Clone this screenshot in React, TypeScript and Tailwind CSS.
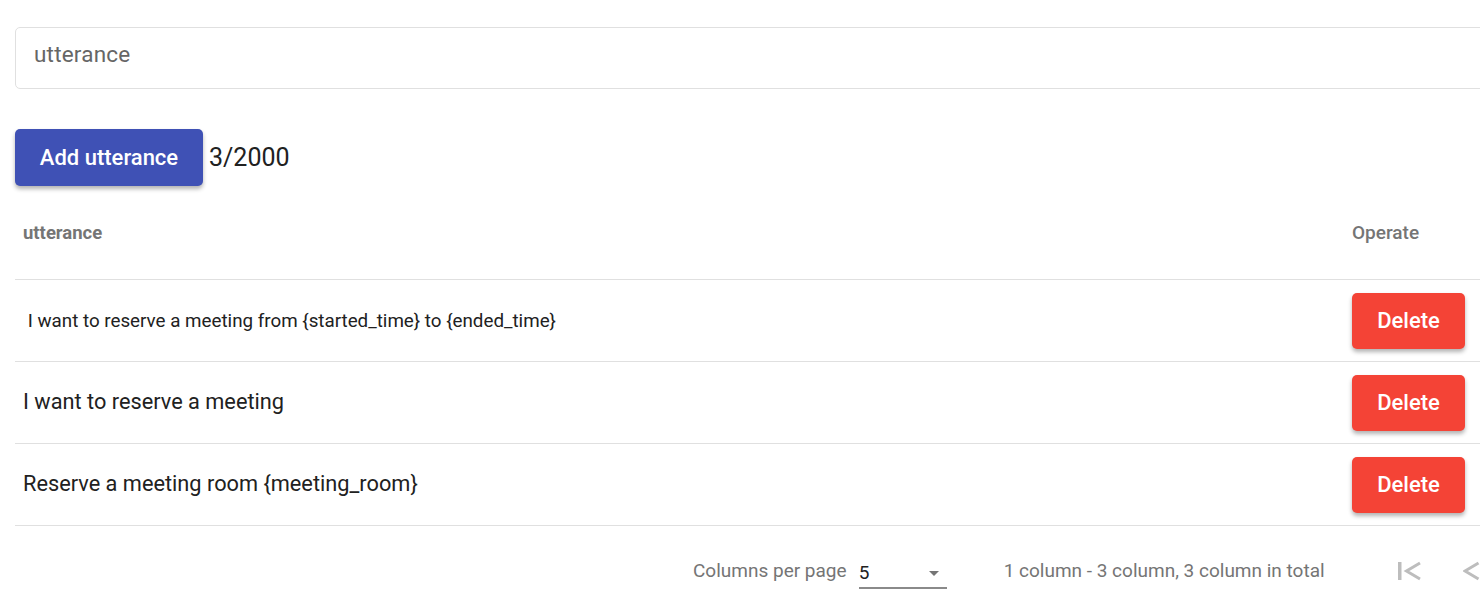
const rows = [
  { text: " I want to reserve a meeting from {started_time} to {ended_time}", small: true },
  { text: "I want to reserve a meeting", small: false },
  { text: "Reserve a meeting room {meeting_room}", small: false },
]

function FirstPageIcon() {
  return (
    <svg width="24" height="20" viewBox="0 0 24 20" fill="none">
      <rect x="0" y="1" width="3.5" height="18" fill="#bdbdbd" />
      <polyline points="22,2 8.5,10 22,18" stroke="#bdbdbd" strokeWidth="3" />
    </svg>
  )
}

function PrevPageIcon() {
  return (
    <svg width="17" height="20" viewBox="0 0 17 20" fill="none">
      <polyline points="15.5,2 2,10 15.5,18" stroke="#bdbdbd" strokeWidth="3" />
    </svg>
  )
}

export default function App() {
  return (
    <div className="w-[1480px] h-[608px] overflow-hidden bg-white font-['Roboto',sans-serif] text-[#212121]">
      <div className="w-[1500px] pl-[15px] pt-[27px]">
        {/* 输入框 */}
        <div className="h-[62px] border border-[#e0e0e0] rounded-[5px] flex items-center pl-[18px] pb-[7px]">
          <span className="text-[22.5px] text-[#666] tracking-[0.2px]">utterance</span>
        </div>

        <div className="mt-[40px] flex items-center">
          <button className="h-[57px] w-[188px] rounded-[5px] bg-[#3f51b5] text-white text-[22px] font-medium shadow-[0_3px_4px_rgba(0,0,0,0.3)]">
            Add utterance
          </button>
          <span className="ml-[6px] text-[25px] text-[#212121]">3/2000</span>
        </div>

        {/* 表格 */}
        <div className="mt-[7px]">
          <div className="h-[87px] flex items-center border-b border-[#e0e0e0] pb-[5px]">
            <div className="flex-1 pl-[8px] text-[18.5px] font-bold text-[#757575]">utterance</div>
            <div className="w-[148px] text-[19px] font-medium text-[#757575]">Operate</div>
          </div>
          {rows.map((r, i) => (
            <div key={i} className="h-[82px] flex items-center border-b border-[#e0e0e0]">
              <div
                className={
                  r.small
                    ? "flex-1 pl-[8px] pt-[2px] text-[18.8px] whitespace-pre"
                    : "flex-1 pl-[8px] text-[21.75px] whitespace-pre"
                }
              >
                {r.text}
              </div>
              <div className="w-[148px]">
                <button className="h-[56px] w-[113px] rounded-[5px] bg-[#f44336] text-white text-[22px] font-medium shadow-[0_3px_4px_rgba(0,0,0,0.3)]">
                  Delete
                </button>
              </div>
            </div>
          ))}
        </div>

        {/* 分页 */}
        <div className="h-[90px] flex items-center pl-[678px] text-[19px] text-[#757575]">
          <span>Columns per page</span>
          <div className="ml-[12px] w-[88px] h-[36px] border-b-2 border-[#8a8a8a] flex items-center justify-between pt-[6px]">
            <span className="text-[19px] text-[#212121]">5</span>
            <svg width="24" height="24" viewBox="0 0 24 24" fill="#757575" className="mr-[1px]">
              <path d="M7 10l5 5 5-5z" />
            </svg>
          </div>
          <span className="ml-[57px]">1 column - 3 column, 3 column in total</span>
          <div className="ml-[73px] flex items-center gap-[41px]">
            <FirstPageIcon />
            <PrevPageIcon />
          </div>
        </div>
      </div>
    </div>
  )
}
